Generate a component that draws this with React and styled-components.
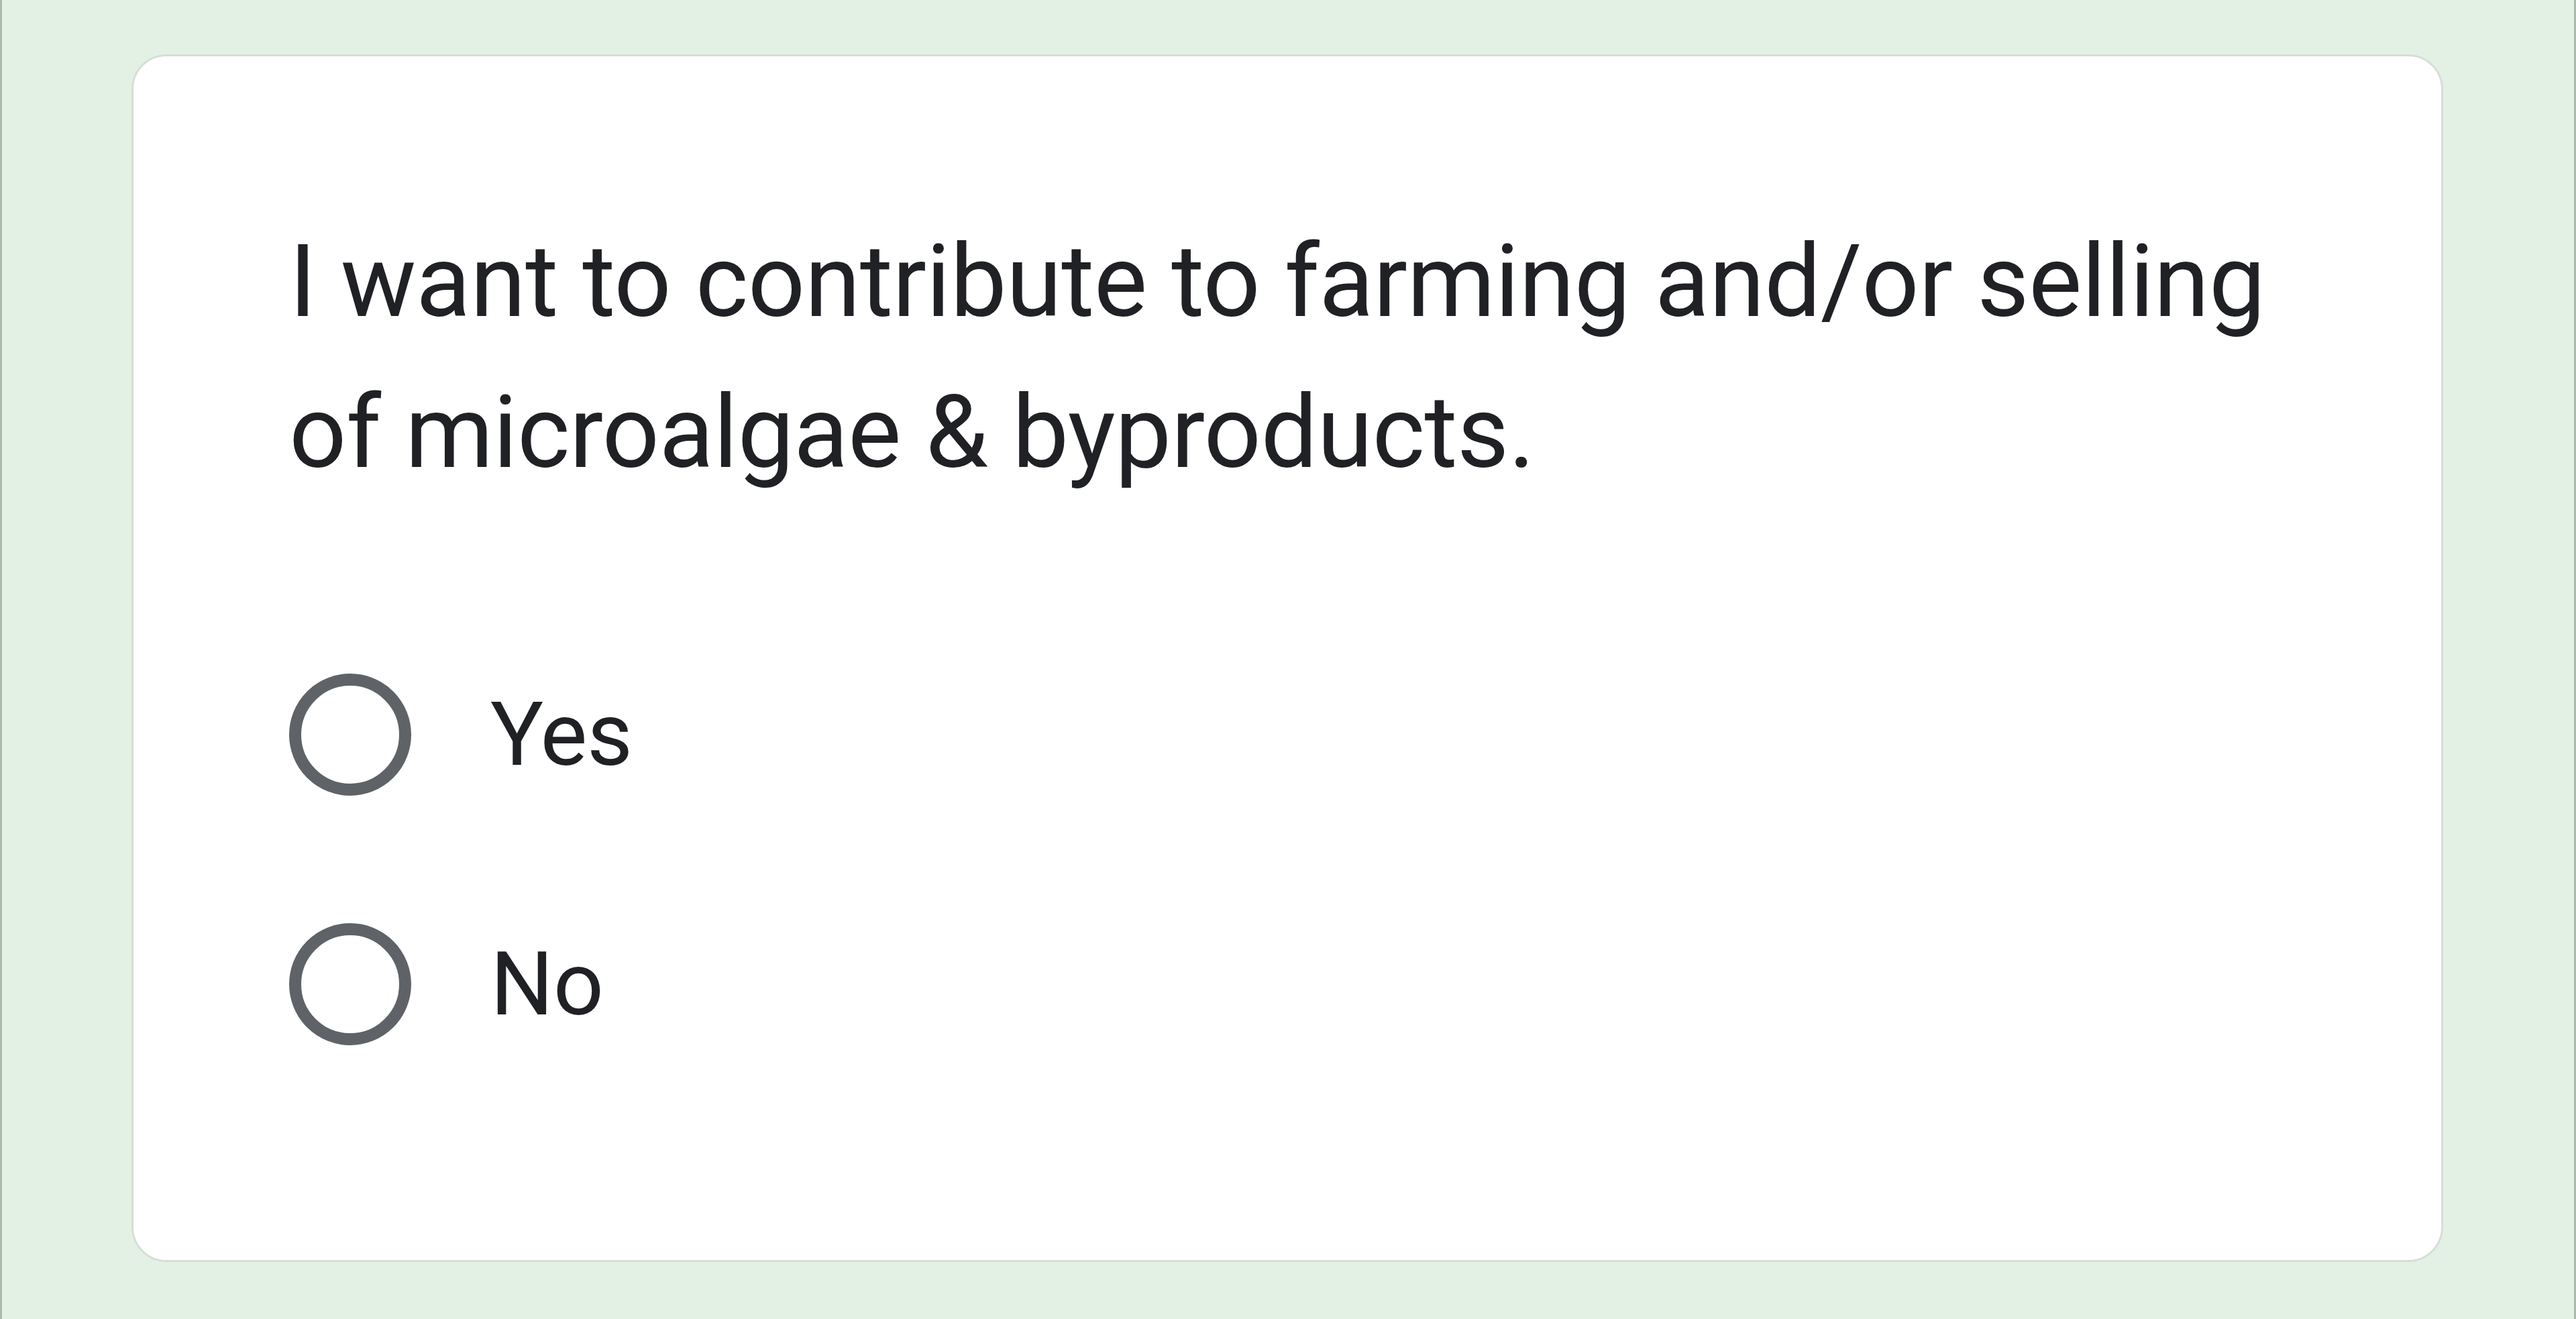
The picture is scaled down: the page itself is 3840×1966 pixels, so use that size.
import styled, { createGlobalStyle } from "styled-components";

const GlobalStyle = createGlobalStyle`
  html, body {
    margin: 0;
    padding: 0;
    background: #e2f1e3;
  }
  body {
    font-family: Roboto, "Liberation Sans", Arial, sans-serif;
  }
`;

const options = ["Yes", "No"];

export default function App() {
  return (
    <>
      <GlobalStyle />
      <Page>
        <QuestionCard>
          <QuestionTitle>
            I want to contribute to farming and/or selling of microalgae &amp; byproducts.
          </QuestionTitle>
          <OptionList>
            {options.map((label) => (
              <OptionRow key={label}>
                <RadioCircle />
                <OptionLabel>{label}</OptionLabel>
              </OptionRow>
            ))}
          </OptionList>
        </QuestionCard>
      </Page>
    </>
  );
}

const Page = styled.div`
  box-sizing: border-box;
  width: 3840px;
  height: 1966px;
  padding: 81px 195px 0 193px;
  background: #e2f1e3;
  border-left: 3px solid #aabbac;
  border-right: 3px solid #aabbac;
`;

const QuestionCard = styled.div`
  box-sizing: border-box;
  width: 3446px;
  height: 1800px;
  padding: 224px 160px 224px 232px;
  background: #ffffff;
  border: 3px solid #d9dcd9;
  border-radius: 52px;
  display: flex;
  flex-direction: column;
`;

const QuestionTitle = styled.div`
  font-size: 150px;
  line-height: 225px;
  color: #202124;
  font-weight: 400;
  letter-spacing: -0.6px;
`;

const OptionList = styled.div`
  display: flex;
  flex-direction: column;
  margin-top: 151px;
`;

const OptionRow = styled.div`
  display: flex;
  align-items: center;
  height: 372px;
  gap: 118px;
`;

const RadioCircle = styled.div`
  box-sizing: border-box;
  width: 182px;
  height: 182px;
  border-radius: 50%;
  border: 18px solid #5f6368;
  flex-shrink: 0;
`;

const OptionLabel = styled.span`
  font-size: 132px;
  line-height: 1;
  color: #202124;
  letter-spacing: -0.5px;
`;
